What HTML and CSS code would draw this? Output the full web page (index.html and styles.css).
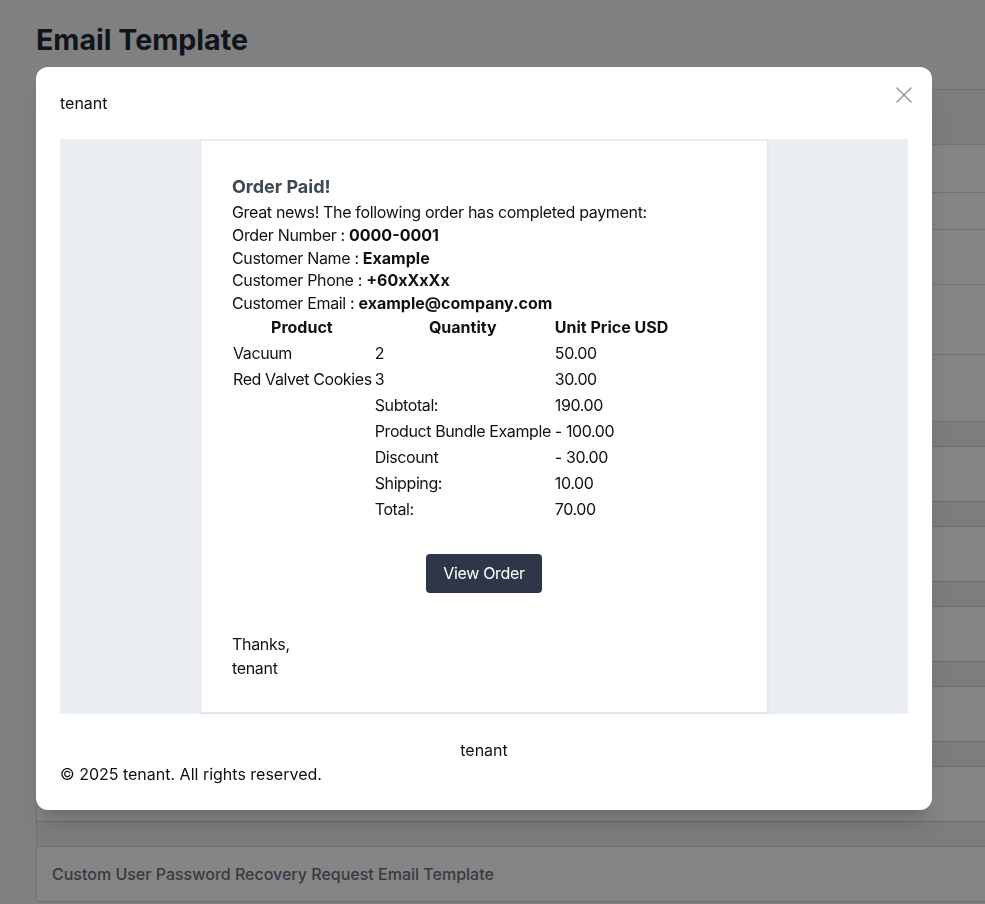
FILE: index.html
```html
<!DOCTYPE html>
<html lang="en">
<head>
<meta charset="utf-8">
<title>Email Template</title>
<link rel="stylesheet" href="styles.css">
</head>
<body>
<div class="page">
  <h1 class="page-title">Email Template</h1>
  <div class="panel">
    <div class="panel-head"></div>
    <div class="panel-row r1"></div>
    <div class="panel-row r2"></div>
    <div class="panel-row r3"></div>
    <div class="panel-row r4"></div>
    <div class="panel-row r5"></div>
  </div>
  <div class="cards">
    <div class="card"><span class="card-title">Order Paid Email Template</span></div>
    <div class="card"><span class="card-title">Order Shipped Email Template</span></div>
    <div class="card"><span class="card-title">Order Cancelled Email Template</span></div>
    <div class="card"><span class="card-title">Order Refunded Email Template</span></div>
    <div class="card"><span class="card-title">Custom User Welcome Email Template</span></div>
    <div class="card"><span class="card-title">Custom User Password Recovery Request Email Template</span></div>
  </div>
</div>

<div class="overlay"></div>

<div class="modal" role="dialog">
  <div class="modal-head">
    <span class="modal-name">tenant</span>
    <button class="close" aria-label="Close">
      <svg width="16" height="16" viewBox="0 0 16 16"><path d="M1 1L15 15M15 1L1 15" stroke="#8e909a" stroke-width="1.4" fill="none" stroke-linecap="round"/></svg>
    </button>
  </div>

  <div class="preview">
    <div class="mail">
      <h2 class="mail-title">Order Paid!</h2>
      <p class="line">Great news! The following order has completed payment:</p>
      <p class="line">Order Number : <b>0000-0001</b></p>
      <p class="line">Customer Name : <b>Example</b></p>
      <p class="line">Customer Phone : <b>+60xXxXx</b></p>
      <p class="line">Customer Email : <b>example@company.com</b></p>
      <table class="items">
        <thead>
          <tr><th>Product</th><th>Quantity</th><th>Unit Price USD</th></tr>
        </thead>
        <tbody>
          <tr><td>Vacuum</td><td>2</td><td>50.00</td></tr>
          <tr><td>Red Valvet Cookies</td><td>3</td><td>30.00</td></tr>
          <tr><td></td><td>Subtotal:</td><td>190.00</td></tr>
          <tr><td></td><td>Product Bundle Example</td><td>- 100.00</td></tr>
          <tr><td></td><td>Discount</td><td>- 30.00</td></tr>
          <tr><td></td><td>Shipping:</td><td>10.00</td></tr>
          <tr><td></td><td>Total:</td><td>70.00</td></tr>
        </tbody>
      </table>
      <div class="action"><a class="btn" href="#">View Order</a></div>
      <p class="sign">Thanks,<br>tenant</p>
    </div>
  </div>

  <div class="modal-foot">
    <p class="foot-name">tenant</p>
    <p class="foot-copy">© 2025 tenant. All rights reserved.</p>
  </div>
</div>
</body>
</html>
```

FILE: styles.css
```css
* { box-sizing: border-box; }
html, body { margin: 0; padding: 0; }
body {
  font-family: "Inter", "Noto Sans", "Liberation Sans", sans-serif;
  background: #f6f6f6;
  color: #111827;
  overflow: hidden;
  height: 904px;
}

.page {
  padding: 22px 0 0 36px;
}
.page-title {
  margin: 0;
  font-size: 28.6px;
  line-height: 36px;
  font-weight: 700;
  color: #1f2937;
}

.panel {
  margin-top: 31px;
  background: #ffffff;
  border-left: 1px solid #d8d8d8;
  border-top: 1px solid #d4d4d4;
}
.panel-head { height: 55px; background: #efefef; border-bottom: 1px solid #dcdcdc; }
.panel-row { border-bottom: 1px solid #dcdcdc; }
.r1 { height: 48px; }
.r2 { height: 37px; }
.r3 { height: 55px; }
.r4 { height: 70px; }
.r5 { height: 67px; }

.cards {
  display: flex;
  flex-direction: column;
  gap: 24px;
  padding-top: 24px;
  background: #efefef;
  border-left: 1px solid #d8d8d8;
}
.card {
  height: 56px;
  background: #ffffff;
  border-top: 1px solid #d4d4d4;
  border-bottom: 1px solid #d4d4d4;
  display: flex;
  align-items: center;
  padding-left: 15px;
}
.card-title {
  font-size: 16px;
  font-weight: 500;
  color: #6b7280;
}

.overlay {
  position: fixed;
  inset: 0;
  background: rgba(0, 0, 0, 0.48);
}

.modal {
  position: absolute;
  top: 67px;
  left: 36px;
  width: 896px;
  background: #ffffff;
  border-radius: 12px;
  padding: 24px;
  box-shadow: 0 20px 25px -5px rgba(0,0,0,0.12), 0 8px 10px -6px rgba(0,0,0,0.12);
}
.modal-head {
  display: flex;
  justify-content: space-between;
  align-items: center;
  height: 24px;
  margin-bottom: 24px;
}
.modal-name {
  font-size: 16px;
  line-height: 24px;
  color: #111111;
}
.close {
  border: 0;
  background: none;
  padding: 0;
  margin: -17px -4px 0 0;
  width: 16px;
  height: 16px;
  cursor: pointer;
}
.close svg { display: block; }

.preview {
  background: #eaeef2;
  padding: 1px 0;
  display: flex;
  justify-content: center;
}
.mail {
  width: 568px;
  background: #ffffff;
  border: 1px solid #e8e5ef;
  box-shadow: 0 2px 0 rgba(0,0,150,0.025), 2px 4px 0 rgba(0,0,150,0.015);
  padding: 32px 31px;
  color: #111111;
  font-size: 16px;
  letter-spacing: -0.33px;
}
.mail b, .mail th, .mail-title { letter-spacing: 0; }
.mail-title {
  margin: 0;
  font-size: 18px;
  line-height: 28px;
  font-weight: 700;
  color: #3d4852;
}
.line {
  margin: 0;
  line-height: 22.75px;
}
.line b { font-weight: 700; }

.items {
  border-spacing: 2px;
  margin: -2px 0 0 -2px;
  font-size: 16px;
}
.items th, .items td {
  padding: 1px;
  line-height: 22px;
  white-space: nowrap;
}
.items th { text-align: center; font-weight: 700; }
.items td { text-align: left; letter-spacing: -0.4px; }
.items td:first-child { padding-right: 0; }

.action {
  display: flex;
  justify-content: center;
  margin: 31px 0 39px;
}
.btn {
  display: inline-block;
  background: #2d3748;
  color: #ffffff;
  text-decoration: none;
  font-size: 16px;
  line-height: 23px;
  padding: 8px 17px;
  border-radius: 4px;
}
.sign {
  margin: 0;
  line-height: 24px;
}

.modal-foot {
  padding-top: 24px;
  font-size: 16px;
  line-height: 24px;
  color: #111111;
}
.modal-foot p { margin: 0; }
.foot-name { text-align: center; }
```
